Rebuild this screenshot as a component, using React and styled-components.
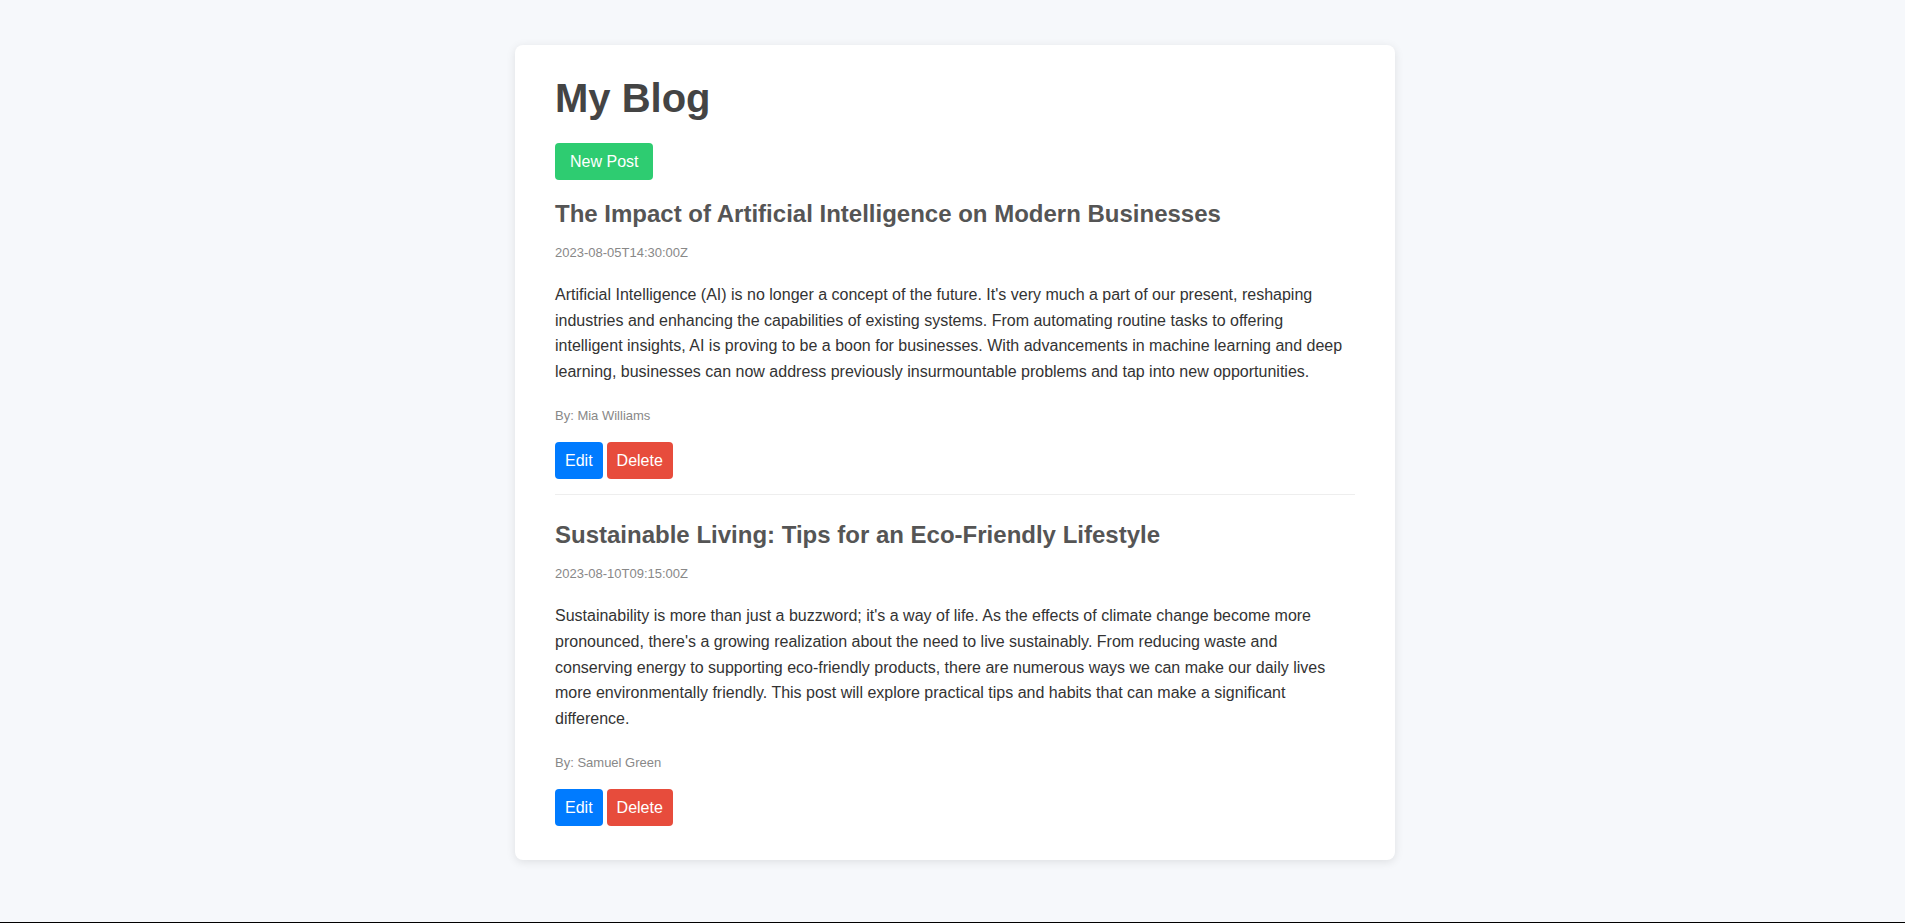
import React from "react";
import styled, { createGlobalStyle } from "styled-components";

const posts = [
  {
    id: 1,
    title: "The Impact of Artificial Intelligence on Modern Businesses",
    date: "2023-08-05T14:30:00Z",
    content:
      "Artificial Intelligence (AI) is no longer a concept of the future. It's very much a part of our present, reshaping industries and enhancing the capabilities of existing systems. From automating routine tasks to offering intelligent insights, AI is proving to be a boon for businesses. With advancements in machine learning and deep learning, businesses can now address previously insurmountable problems and tap into new opportunities.",
    author: "Mia Williams",
  },
  {
    id: 2,
    title: "Sustainable Living: Tips for an Eco-Friendly Lifestyle",
    date: "2023-08-10T09:15:00Z",
    content:
      "Sustainability is more than just a buzzword; it's a way of life. As the effects of climate change become more pronounced, there's a growing realization about the need to live sustainably. From reducing waste and conserving energy to supporting eco-friendly products, there are numerous ways we can make our daily lives more environmentally friendly. This post will explore practical tips and habits that can make a significant difference.",
    author: "Samuel Green",
  },
];

const GlobalStyle = createGlobalStyle`
  * {
    box-sizing: border-box;
  }
  body {
    margin: 0;
    background-color: #f6f8fb;
    font-family: "Liberation Sans", Arial, sans-serif;
  }
`;

const App = () => {
  return (
    <Page>
      <GlobalStyle />
      <Card>
        <Title>My Blog</Title>
        <Button color="#2ecc71" wide>
          New Post
        </Button>
        <PostList>
          {posts.map((post) => (
            <Post key={post.id}>
              <PostTitle>{post.title}</PostTitle>
              <Meta gap={22}>{post.date}</Meta>
              <Content>{post.content}</Content>
              <Meta gap={19}>By: {post.author}</Meta>
              <Actions>
                <Button color="#007bff">Edit</Button>
                <Button color="#e74c3c">Delete</Button>
              </Actions>
            </Post>
          ))}
        </PostList>
      </Card>
    </Page>
  );
};
export default App;

const Page = styled.div`
  min-height: 100vh;
  display: flex;
  justify-content: center;
  align-items: flex-start;
  padding: 45px 0 0 5px;
  border-bottom: 1px solid #000;
`;

const Card = styled.div`
  width: 880px;
  background-color: white;
  border-radius: 8px;
  box-shadow: 0 2px 10px rgba(0, 0, 0, 0.1);
  padding: 30px 40px 19px;
`;

const Title = styled.h1`
  margin: 0 0 22px;
  font-size: 40px;
  line-height: 46px;
  color: #444;
`;

const Button = styled.button`
  display: inline-block;
  border: none;
  border-radius: 4px;
  background-color: ${(p) => p.color};
  color: white;
  font-family: "Liberation Sans", Arial, sans-serif;
  font-size: 16px;
  line-height: 19px;
  padding: 9px ${(p) => (p.wide ? "15px" : "10px")};
  cursor: pointer;
`;

const PostList = styled.div`
  display: flex;
  flex-direction: column;
  margin-top: 18px;
`;

const Post = styled.div`
  padding-bottom: 15px;
  border-bottom: 1px solid #eee;
  margin-bottom: 24px;

  &:last-child {
    border-bottom: none;
    margin-bottom: 0;
  }
`;

const PostTitle = styled.h2`
  margin: 2px 0 17px;
  font-size: 24px;
  line-height: 28px;
  color: #555;
`;

const Meta = styled.p`
  margin: 0 0 ${(p) => p.gap}px;
  font-size: 13px;
  line-height: 15px;
  color: #888;
`;

const Content = styled.p`
  margin: 0 0 24px;
  font-size: 16px;
  line-height: 1.6;
  color: #333;
`;

const Actions = styled.div`
  display: flex;
  gap: 4px;
`;
